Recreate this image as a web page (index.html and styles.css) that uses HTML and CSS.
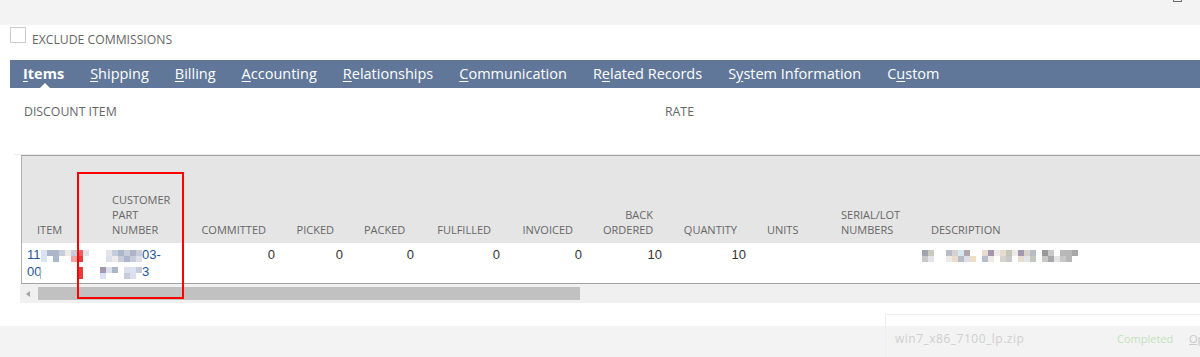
FILE: index.html
```html
<!DOCTYPE html>
<html>
<head>
<meta charset="utf-8">
<title>Items</title>
<link rel="stylesheet" href="styles.css">
</head>
<body>
<div class="page">
  <div class="topbar"><span class="top-box"></span></div>

  <div class="field">
    <span class="checkbox"></span>
    <span class="field-label">EXCLUDE COMMISSIONS</span>
  </div>

  <nav class="tabs">
    <a class="tab active"><u>I</u>tems</a>
    <a class="tab"><u>S</u>hipping</a>
    <a class="tab"><u>B</u>illing</a>
    <a class="tab"><u>A</u>ccounting</a>
    <a class="tab"><u>R</u>elationships</a>
    <a class="tab"><u>C</u>ommunication</a>
    <a class="tab">R<u>e</u>lated Records</a>
    <a class="tab">S<u>y</u>stem Information</a>
    <a class="tab">C<u>u</u>stom</a>
  </nav>

  <div class="discount">
    <span class="lbl">DISCOUNT ITEM</span>
    <span class="lbl">RATE</span>
  </div>

  <div class="grid-wrap">
    <div class="grid-box">
      <table class="grid">
        <colgroup>
          <col class="w-item"><col class="w-cpn"><col class="w-95"><col class="w-68"><col class="w-71"><col class="w-86"><col class="w-82"><col class="w-80"><col class="w-84"><col class="w-74"><col class="w-87"><col class="w-desc">
        </colgroup>
        <thead>
          <tr>
            <th class="h-item"><span class="hl">ITEM</span></th>
            <th class="h-cpn"><span class="hl">CUSTOMER<br>PART<br>NUMBER</span></th>
            <th class="num"><span class="hl">COMMITTED</span></th>
            <th class="num"><span class="hl">PICKED</span></th>
            <th class="num"><span class="hl">PACKED</span></th>
            <th class="num"><span class="hl">FULFILLED</span></th>
            <th class="num"><span class="hl">INVOICED</span></th>
            <th class="num"><span class="hl">BACK<br>ORDERED</span></th>
            <th class="num"><span class="hl">QUANTITY</span></th>
            <th><span class="hl">UNITS</span></th>
            <th><span class="hl">SERIAL/LOT<br>NUMBERS</span></th>
            <th class="h-desc"><span class="hl">DESCRIPTION</span></th>
          </tr>
        </thead>
        <tbody>
          <tr>
            <td class="d-item">
              <div class="cell">
                <div class="ln"><a class="lnk">11</a><span class="mz"><span class="mr"><i class="kn"></i><i class="kj"></i><i class="kj"></i><i class="ki"></i><i class="k9"></i><i class="ki"></i><i class="kk"></i><i class="kf"></i></span><span class="mr"><i class="kn"></i><i class="k0"></i><i class="kj"></i><i class="k0"></i><i class="k0"></i><i class="kl"></i><i class="km"></i><i class="k0"></i></span></span></div>
                <div class="ln"><a class="lnk">00</a><span class="mz cur"><span class="mr"><i class="k0"></i><i class="k0"></i><i class="k0"></i><i class="k0"></i><i class="k0"></i><i class="k0"></i><i class="km"></i><i class="k0"></i></span><span class="mr"><i class="k0"></i><i class="k0"></i><i class="k0"></i><i class="k0"></i><i class="k0"></i><i class="k0"></i><i class="km"></i><i class="k0"></i></span></span></div>
              </div>
            </td>
            <td class="d-cpn">
              <div class="cell">
                <div class="ln"><span class="mz"><span class="mr"><i class="k0"></i><i class="kf"></i><i class="ki"></i><i class="kj"></i><i class="ki"></i><i class="kj"></i><i class="ki"></i></span><span class="mr"><i class="k0"></i><i class="kh"></i><i class="k9"></i><i class="ki"></i><i class="kj"></i><i class="ki"></i><i class="kh"></i></span></span><a class="lnk">03-</a></div>
                <div class="ln"><span class="mz"><span class="mr"><i class="k8"></i><i class="kh"></i><i class="kj"></i><i class="k0"></i><i class="kh"></i><i class="kn"></i><i class="ki"></i></span><span class="mr"><i class="kn"></i><i class="k0"></i><i class="k0"></i><i class="k0"></i><i class="ki"></i><i class="kh"></i><i class="k0"></i></span></span><a class="lnk">3</a></div>
              </div>
            </td>
            <td class="num"><div class="cell">0</div></td>
            <td class="num"><div class="cell">0</div></td>
            <td class="num"><div class="cell">0</div></td>
            <td class="num"><div class="cell">0</div></td>
            <td class="num"><div class="cell">0</div></td>
            <td class="num"><div class="cell">10</div></td>
            <td class="num"><div class="cell">10</div></td>
            <td><div class="cell"></div></td>
            <td><div class="cell"></div></td>
            <td class="d-desc">
              <div class="cell">
                <span class="mz"><span class="mr"><i class="k1"></i><i class="k2"></i><i class="k0"></i><i class="k0"></i><i class="k3"></i><i class="k4"></i><i class="k5"></i><i class="k6"></i><i class="k0"></i><i class="k0"></i><i class="k7"></i><i class="k8"></i><i class="k9"></i><i class="k7"></i><i class="ka"></i><i class="k9"></i><i class="k8"></i><i class="k4"></i><i class="k3"></i><i class="k0"></i><i class="kb"></i><i class="kc"></i><i class="k0"></i><i class="kd"></i><i class="kd"></i><i class="ke"></i></span><span class="mr"><i class="kc"></i><i class="kf"></i><i class="k0"></i><i class="k0"></i><i class="k9"></i><i class="k7"></i><i class="k3"></i><i class="kh"></i><i class="kg"></i><i class="k0"></i><i class="k3"></i><i class="k9"></i><i class="k0"></i><i class="k4"></i><i class="kc"></i><i class="k0"></i><i class="k7"></i><i class="kf"></i><i class="ka"></i><i class="k0"></i><i class="kc"></i><i class="ke"></i><i class="kf"></i><i class="kc"></i><i class="kd"></i><i class="k0"></i></span></span>
              </div>
            </td>
          </tr>
        </tbody>
      </table>
    </div>
    <div class="hscroll">
      <span class="arrow"></span>
      <span class="thumb"></span>
    </div>
  </div>

  <div class="footer"></div>

  <div class="annot"></div>

  <div class="download">
    <span class="dl-name">win7_x86_7100_lp.zip</span>
    <span class="dl-status">Completed</span>
    <a class="dl-open">Op</a>
  </div>
</div>
</body>
</html>
```

FILE: styles.css
```css
html, body {
  margin: 0;
  padding: 0;
}

body {
  font-family: "Open Sans", "Liberation Sans", sans-serif;
  background: #ffffff;
  color: #666666;
  overflow: hidden;
}

.page {
  position: relative;
  width: 1200px;
  height: 357px;
  overflow: hidden;
}

/* top gray band */
.topbar {
  height: 25px;
  background: #f3f3f3;
  position: relative;
}

.top-box {
  position: absolute;
  left: 1173px;
  top: -7px;
  width: 7px;
  height: 7px;
  border: 1px solid #6b6b6b;
}

/* checkbox field */
.field {
  display: flex;
  align-items: flex-start;
  gap: 6px;
  margin-top: 2px;
  padding-left: 10px;
  height: 16px;
}

.checkbox {
  width: 14px;
  height: 14px;
  border: 1px solid #cccccc;
  background: #ffffff;
  flex: none;
}

.field-label {
  font-size: 12.2px;
  line-height: 16px;
  margin-top: 5px;
  color: #666666;
  white-space: nowrap;
}

/* tabs */
.tabs {
  display: flex;
  margin: 17px 0 0 10px;
  height: 28px;
  background: #607799;
}

.tab {
  position: relative;
  padding: 0 13px;
  font-size: 14.5px;
  line-height: 28px;
  color: #ffffff;
  white-space: nowrap;
}

.tab u {
  text-decoration: underline;
  text-underline-offset: 2px;
}

.tab.active {
  font-weight: 700;
}

.tab.active::after {
  content: "";
  position: absolute;
  left: 30px;
  bottom: 0;
  width: 0;
  height: 0;
  border-left: 5px solid transparent;
  border-right: 5px solid transparent;
  border-bottom: 5px solid #ffffff;
}

/* discount fields */
.discount {
  display: grid;
  grid-template-columns: 641px auto;
  margin: 16px 0 0 14px;
  padding-left: 10px;
  height: 50px;
  border-bottom: 1px solid #ececec;
}

.lbl {
  font-size: 12.3px;
  line-height: 16px;
  color: #666666;
}

/* grid */
.grid-wrap {
  margin-left: 20px;
}

.grid-box {
  margin-left: 1px;
  border-top: 1px solid #9e9e9e;
  border-left: 1px solid #b0b0b0;
  border-bottom: 1px solid #a3a3a3;
  width: 1400px;
}

.grid {
  border-collapse: collapse;
  border-spacing: 0;
  table-layout: fixed;
  width: 1398px;
}

.w-item { width: 78px; }
.w-cpn { width: 95px; }
.w-95 { width: 95px; }
.w-68 { width: 68px; }
.w-71 { width: 71px; }
.w-86 { width: 86px; }
.w-82 { width: 82px; }
.w-80 { width: 80px; }
.w-84 { width: 84px; }
.w-74 { width: 74px; }
.w-87 { width: 87px; }
.w-desc { width: 498px; }

.grid th {
  height: 87px;
  padding: 0 6px 0 6px;
  background: #e5e5e5;
  vertical-align: bottom;
  text-align: left;
  font-weight: 400;
  font-size: 11px;
  line-height: 15px;
  color: #666666;
  white-space: nowrap;
}

.grid th.num {
  text-align: right;
  padding-right: 24px;
}

.grid th.h-item {
  padding-left: 15px;
}

.grid th.h-cpn {
  padding-left: 12px;
}

.grid th.h-desc {
  padding-left: 9px;
}

.hl {
  display: block;
  padding-bottom: 6px;
}

.grid td {
  height: 40px;
  padding: 0 6px;
  vertical-align: top;
  font-family: "Liberation Sans", Arial, sans-serif;
  font-size: 13px;
  line-height: 17px;
  color: #333333;
  white-space: nowrap;
  background: #ffffff;
}

.grid td.num {
  text-align: right;
  padding-right: 15px;
}

.grid td.d-item {
  padding-left: 5px;
}

.grid td.d-cpn {
  padding-left: 0;
}

.grid td.d-desc {
  padding-left: 0;
}

.cell {
  padding-top: 3px;
}

.ln {
  height: 17px;
}

.lnk {
  color: #255599;
}

/* pixelated (redacted) blocks */
.mz {
  display: inline-flex;
  flex-direction: column;
  vertical-align: middle;
}

.mz.cur {
  border-left: 1px solid #9fb7dd;
  margin-left: -1px;
}

.mr {
  display: flex;
}

.mz i {
  display: block;
  width: 6px;
  height: 6px;
}

.k0 { background: transparent; }
.k1 { background: #9ea4ae; }
.k2 { background: #c8cac0; }
.k3 { background: #b8bcc6; }
.k4 { background: #d8d2cc; }
.k5 { background: #d8e8f0; }
.k6 { background: #b0a8a8; }
.k7 { background: #e8dccf; }
.k8 { background: #a496ae; }
.k9 { background: #eeeae8; }
.ka { background: #c4c8bc; }
.kb { background: #999999; }
.kc { background: #c8c8c8; }
.kd { background: #b8b8b8; }
.ke { background: #a8a8a8; }
.kf { background: #e4e4e8; }
.kg { background: #f0dcc0; }
.kh { background: #dce0ec; }
.ki { background: #c6ccda; }
.kj { background: #acb6cb; }
.kk { background: #e86060; }
.kl { background: #f6a2a2; }
.km { background: #e23c3c; }
.kn { background: #d8e4f4; }

/* fake horizontal scrollbar */
.hscroll {
  display: flex;
  align-items: flex-start;
  height: 16px;
  padding-top: 3px;
  background: #f0f0f0;
}

.arrow {
  width: 0;
  height: 0;
  margin: 4px 8px 0 6px;
  border-top: 3px solid transparent;
  border-bottom: 3px solid transparent;
  border-right: 4px solid #a3a3a3;
}

.thumb {
  width: 542px;
  height: 13px;
  background: #c1c1c1;
}

/* footer band */
.footer {
  margin-top: 23px;
  height: 40px;
  background: #f3f3f3;
}

/* red annotation frame */
.annot {
  position: absolute;
  left: 77px;
  top: 172px;
  width: 107px;
  height: 127px;
  box-sizing: border-box;
  border: 2px solid #ff0000;
}

/* faded download notification */
.download {
  position: absolute;
  left: 885px;
  top: 314px;
  right: -20px;
  bottom: -10px;
  border-top: 1px solid #eeeeee;
  border-left: 1px solid #eeeeee;
  display: grid;
  grid-template-columns: 222px 72px auto;
  align-content: start;
  padding: 16px 0 0 9px;
  font-size: 11px;
  line-height: 16px;
  white-space: nowrap;
}

.dl-name {
  color: #cfcfcf;
  font-size: 12px;
  letter-spacing: 0.5px;
}

.dl-status {
  color: #c3e2bd;
}

.dl-open {
  color: #c8c8c8;
  text-decoration: underline;
}
```
